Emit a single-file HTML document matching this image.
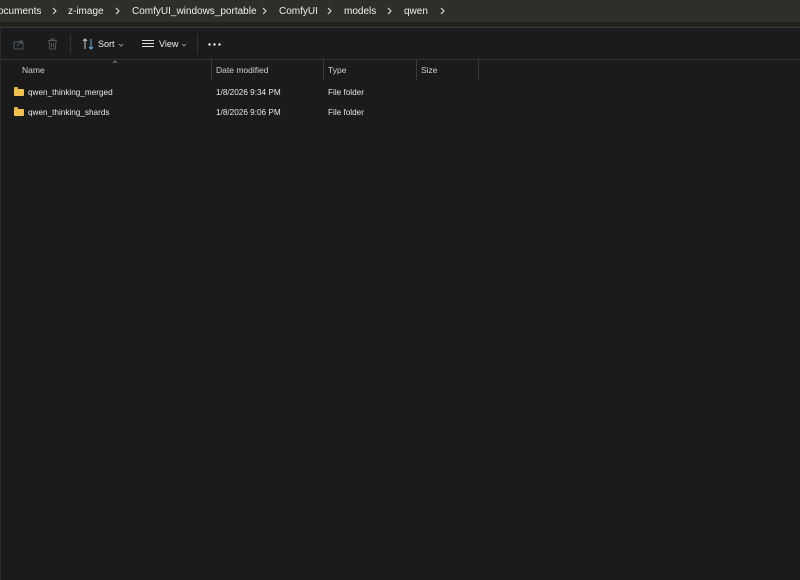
<!DOCTYPE html>
<html><head><style>
body{margin:0;width:800px;height:580px;background:#1b1b1b;font-family:"Liberation Sans",sans-serif;color:#fff;overflow:hidden;position:relative}
.a{position:absolute;white-space:nowrap}
.top{position:absolute;left:0;top:0;width:800px;height:22px;background:#2e2e2a}
.top2{position:absolute;left:0;top:22px;width:800px;height:5px;background:#21211e}
.l1{position:absolute;left:0;top:27px;width:800px;height:1px;background:#3b3b3b}
.l2{position:absolute;left:0;top:59px;width:800px;height:1px;background:#353535}
.bc{font-size:10px;top:6px;color:#f0f0f0}
.ch{position:absolute;top:7px}
.hd{font-size:8.5px;top:65px;color:#d0d0d0}
.r{font-size:8.2px;color:#e6e6e6}
.sep{position:absolute;top:60px;width:1px;height:20px;background:#3a3a3a}
.fold{position:absolute;width:10px;height:7px;background:#f2c14e;border-radius:1px}
.fold:before{content:"";position:absolute;left:0;top:-2px;width:4px;height:2px;background:#e8b23e;border-radius:1px 1px 0 0}
</style></head><body>
<div class="top"></div><div class="top2"></div><div class="l1"></div><div class="l2"></div>
<div style="position:absolute;left:0;top:28px;width:1px;height:552px;background:#2a2a2a"></div>
<svg width="0" height="0" style="position:absolute"><defs><symbol id="c" viewBox="0 0 5 8"><path d="M1 1L4 4L1 7" fill="none" stroke="#ddd" stroke-width="1.1"/></symbol></defs></svg>
<span class="a bc" style="left:-2px">ocuments</span><svg class="ch" style="left:52px" width="5" height="8"><use href="#c"/></svg>
<span class="a bc" style="left:68px">z-image</span><svg class="ch" style="left:115px" width="5" height="8"><use href="#c"/></svg>
<span class="a bc" style="left:132px">ComfyUI_windows_portable</span><svg class="ch" style="left:262px" width="5" height="8"><use href="#c"/></svg>
<span class="a bc" style="left:279px">ComfyUI</span><svg class="ch" style="left:327px" width="5" height="8"><use href="#c"/></svg>
<span class="a bc" style="left:344px">models</span><svg class="ch" style="left:387px" width="5" height="8"><use href="#c"/></svg>
<span class="a bc" style="left:404px">qwen</span><svg class="ch" style="left:440px" width="5" height="8"><use href="#c"/></svg>
<svg class="a" style="left:13px;top:38px" width="12" height="12" viewBox="0 0 12 12" fill="none" stroke="#4a5a66" stroke-width="1"><rect x="1" y="4" width="9" height="7" rx="1"/><path d="M4 8 L9 3 M6 3 H9 V6"/></svg>
<svg class="a" style="left:47px;top:38px" width="11" height="12" viewBox="0 0 11 12" fill="none" stroke="#555" stroke-width="1"><path d="M1 2.5H10M4 2.5V1H7V2.5M2 2.5L2.7 11H8.3L9 2.5M4.5 5V9M6.5 5V9"/></svg>
<div style="position:absolute;left:70px;top:34px;width:1px;height:20px;background:#333"></div>
<svg class="a" style="left:82px;top:38px" width="12" height="12" viewBox="0 0 12 12" fill="none" stroke="#ccc" stroke-width="1"><path d="M3 11V1M1 3L3 1L5 3"/><path d="M9 1V11M7 9L9 11L11 9" stroke="#5fb2f2"/></svg>
<span class="a" style="left:98px;top:39px;font-size:9px;color:#eee">Sort</span>
<svg class="a" style="left:118px;top:43px" width="6" height="4"><path d="M1 1L3 3L5 1" fill="none" stroke="#aaa" stroke-width="0.8"/></svg>
<svg class="a" style="left:142px;top:39px" width="12" height="10" viewBox="0 0 12 10" stroke="#ddd" stroke-width="1"><path d="M0 1.5H12M0 4.5H12M0 7.5H12"/></svg>
<span class="a" style="left:159px;top:39px;font-size:9px;color:#eee">View</span>
<svg class="a" style="left:181px;top:43px" width="6" height="4"><path d="M1 1L3 3L5 1" fill="none" stroke="#aaa" stroke-width="0.8"/></svg>
<div style="position:absolute;left:197px;top:34px;width:1px;height:20px;background:#333"></div>
<svg class="a" style="left:208px;top:43px" width="14" height="3"><circle cx="1.5" cy="1.5" r="1.2" fill="#eee"/><circle cx="6.5" cy="1.5" r="1.2" fill="#eee"/><circle cx="11.5" cy="1.5" r="1.2" fill="#eee"/></svg>
<svg class="a" style="left:112px;top:60px" width="6" height="4"><path d="M1 3L3 1L5 3" fill="none" stroke="#999" stroke-width="0.8"/></svg>
<span class="a hd" style="left:22px">Name</span>
<div class="sep" style="left:211px"></div>
<span class="a hd" style="left:216px">Date modified</span>
<div class="sep" style="left:323px"></div>
<span class="a hd" style="left:328px">Type</span>
<div class="sep" style="left:416px"></div>
<span class="a hd" style="left:421px">Size</span>
<div class="sep" style="left:478px"></div>
<div class="fold" style="left:14px;top:89px"></div>
<span class="a r" style="left:28px;top:88px">qwen_thinking_merged</span>
<span class="a r" style="left:216px;top:88px">1/8/2026 9:34 PM</span>
<span class="a r" style="left:328px;top:88px">File folder</span>
<div class="fold" style="left:14px;top:109px"></div>
<span class="a r" style="left:28px;top:108px">qwen_thinking_shards</span>
<span class="a r" style="left:216px;top:108px">1/8/2026 9:06 PM</span>
<span class="a r" style="left:328px;top:108px">File folder</span>
</body></html>
